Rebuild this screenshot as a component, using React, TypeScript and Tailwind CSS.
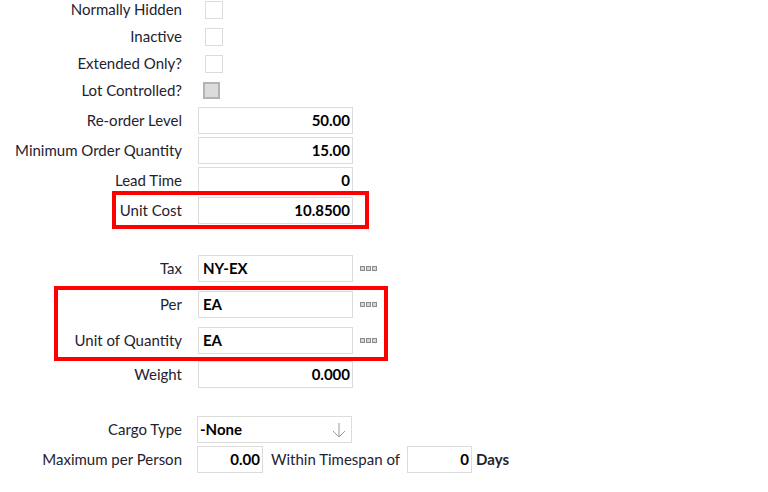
import React from 'react';

const font = { fontFamily: 'Lato, "Open Sans", sans-serif' };

function Dots() {
  return (
    <svg width="18" height="6" viewBox="0 0 18 6" className="shrink-0">
      {[0, 6, 12].map((x) => (
        <rect key={x} x={x + 0.5} y={0.5} width={4} height={4} fill="#d6d6d6" stroke="#8c8c8c" strokeWidth={1} />
      ))}
    </svg>
  );
}

function CheckRow({ label, disabled }: { label: string; disabled?: boolean }) {
  return (
    <div className="flex h-[27px] items-center">
      <span className="w-[182px] text-right text-[15px] text-[#1f2230]">{label}</span>
      {disabled ? (
        <span className="ml-[21px] block h-[17px] w-[17px] border-2 border-[#b4b4b4] bg-[#dcdcdc]" />
      ) : (
        <span className="ml-[23px] block h-[18px] w-[18px] border border-[#dcdcdc] bg-white" />
      )}
    </div>
  );
}

interface FieldProps {
  label: string;
  value: string;
  align?: 'left' | 'right';
  lookup?: boolean;
  labelWidth?: string;
}

function FieldRow({ label, value, align = 'right', lookup, labelWidth = 'w-[182px]' }: FieldProps) {
  return (
    <div className="flex h-[27px] items-center">
      <span className={`${labelWidth} shrink-0 text-right text-[15px] text-[#1f2230]`}>{label}</span>
      <div
        className={`ml-4 flex h-[27px] w-[155px] items-center border border-[#dcdcdc] bg-white text-[15px] font-bold text-black ${
          align === 'right' ? 'justify-end pr-[2px]' : 'pl-[4px]'
        }`}
      >
        {value}
      </div>
      {lookup && (
        <span className="ml-[7px] flex items-center">
          <Dots />
        </span>
      )}
    </div>
  );
}

export default function App() {
  return (
    <div className="h-[492px] w-[768px] overflow-hidden bg-white" style={font}>
      <div className="-mt-[4px] flex flex-col">
        <CheckRow label="Normally Hidden" />
        <CheckRow label="Inactive" />
        <CheckRow label="Extended Only?" />
        <CheckRow label="Lot Controlled?" disabled />
      </div>

      <div className="mt-[3px] flex flex-col gap-[3px]">
        <FieldRow label="Re-order Level" value="50.00" />
        <FieldRow label="Minimum Order Quantity" value="15.00" />
        <FieldRow label="Lead Time" value="0" />
        <div className="relative">
          <FieldRow label="Unit Cost" value="10.8500" />
          {/* highlight */}
          <span className="pointer-events-none absolute -top-[6px] left-[112px] h-[38px] w-[257px] border-4 border-[#f00]" />
        </div>
      </div>

      <div className="mt-[31px]">
        <FieldRow label="Tax" value="NY-EX" align="left" lookup />
      </div>

      <div className="ml-[54px] mt-[4px] flex w-[334px] flex-col gap-[9px] border-4 border-[#f00] pb-[3px] pt-px">
        <FieldRow label="Per" value="EA" align="left" lookup labelWidth="w-[124px]" />
        <FieldRow label="Unit of Quantity" value="EA" align="left" lookup labelWidth="w-[124px]" />
      </div>

      <FieldRow label="Weight" value="0.000" />

      <div className="mt-[28px] flex h-[27px] items-center">
        <span className="w-[182px] text-right text-[15px] text-[#1f2230]">Cargo Type</span>
        <div className="ml-[15px] flex h-[27px] w-[155px] items-center justify-between border border-[#dcdcdc] bg-white pl-[2px] pr-[5px] text-[15px] font-bold text-black">
          <span>-None</span>
          <svg width="14" height="16" viewBox="0 0 14 16" fill="none" stroke="#9a9a9a" strokeWidth="1">
            <path d="M7 1 V15 M1 9 L7 15 L13 9" />
          </svg>
        </div>
      </div>

      <div className="mt-[3px] flex h-[27px] items-center text-[15px]">
        <span className="w-[182px] text-right text-[#1f2230]">Maximum per Person</span>
        <div className="ml-[15px] flex h-[27px] w-[66px] items-center justify-end border border-[#dcdcdc] bg-white pr-[2px] font-bold text-black">
          0.00
        </div>
        <span className="ml-[8px] text-[#1f2230]">Within Timespan of</span>
        <div className="ml-[7px] flex h-[27px] w-[65px] items-center justify-end border border-[#dcdcdc] bg-white pr-[2px] font-bold text-black">
          0
        </div>
        <span className="ml-[4px] font-bold text-[#1f2230]">Days</span>
      </div>
    </div>
  );
}
